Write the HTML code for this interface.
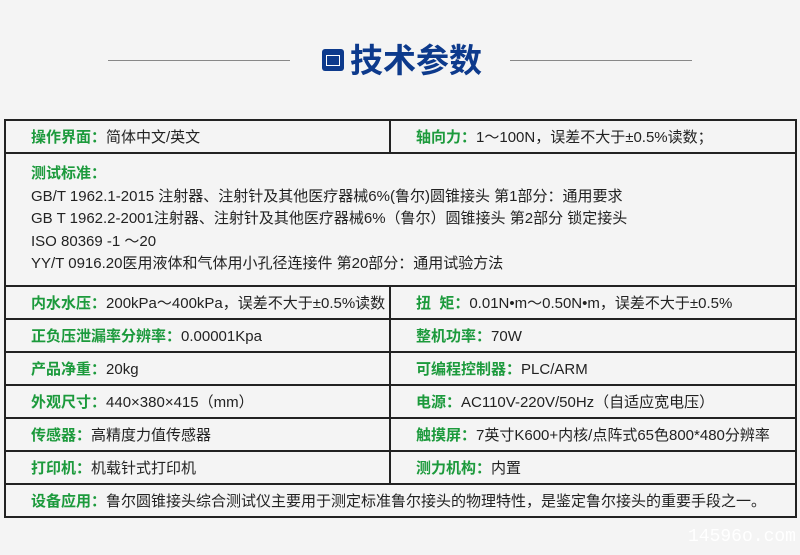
<!DOCTYPE html>
<html><head><meta charset="utf-8"><style>
*{margin:0;padding:0;box-sizing:border-box}
body{width:800px;height:555px;background:#f4f4f4;font-family:"Liberation Sans","Noto Sans CJK SC",sans-serif;font-size:15px;color:#222;position:relative;overflow:hidden}
.line{position:absolute;top:60px;height:1px;background:#888}
.title{position:absolute;left:350px;top:40px;font-size:33px;font-weight:bold;color:#0d3a8c;letter-spacing:0px;line-height:42px}
.icon{position:absolute;left:322px;top:49px;width:22px;height:22px;background:#0d3a8c;border-radius:3px}
.icon i{position:absolute;left:4px;top:6px;width:14px;height:11px;border:1.5px solid #fff}
table{position:absolute;left:4px;top:119px;width:793px;border-collapse:collapse}
td{border:2px solid #222;height:33px;padding:0 0 0 25px;vertical-align:middle;white-space:nowrap}
td.r{width:406px}
b{color:#1c9a3c;font-weight:bold}
.std{padding-top:9px;padding-bottom:6px;line-height:22.5px;height:133px;vertical-align:top}
.wm{position:absolute;right:4px;top:527px;color:#fff;font-size:18px;font-family:"Liberation Mono",monospace}
</style></head><body>
<div class="line" style="left:108px;width:182px"></div>
<div class="line" style="left:510px;width:182px"></div>
<div class="icon"><i></i></div>
<div class="title">技术参数</div>
<table>
<tr><td><b>操作界面：</b>简体中文/英文</td><td class="r"><b>轴向力：</b>1～100N，误差不大于±0.5%读数；</td></tr>
<tr><td colspan="2" class="std"><b>测试标准：</b><br>GB/T 1962.1-2015 注射器、注射针及其他医疗器械6%(鲁尔)圆锥接头 第1部分：通用要求<br>GB T 1962.2-2001注射器、注射针及其他医疗器械6%（鲁尔）圆锥接头 第2部分 锁定接头<br>ISO 80369 -1 ～20<br>YY/T 0916.20医用液体和气体用小孔径连接件 第20部分：通用试验方法</td></tr>
<tr><td><b>内水水压：</b>200kPa～400kPa，误差不大于±0.5%读数</td><td class="r"><b>扭&nbsp;&nbsp;矩：</b>0.01N•m～0.50N•m，误差不大于±0.5%</td></tr>
<tr><td><b>正负压泄漏率分辨率：</b>0.00001Kpa</td><td class="r"><b>整机功率：</b>70W</td></tr>
<tr><td><b>产品净重：</b>20kg</td><td class="r"><b>可编程控制器：</b>PLC/ARM</td></tr>
<tr><td><b>外观尺寸：</b>440×380×415（mm）</td><td class="r"><b>电源：</b>AC110V-220V/50Hz（自适应宽电压）</td></tr>
<tr><td><b>传感器：</b>高精度力值传感器</td><td class="r"><b>触摸屏：</b>7英寸K600+内核/点阵式65色800*480分辨率</td></tr>
<tr><td><b>打印机：</b>机载针式打印机</td><td class="r"><b>测力机构：</b>内置</td></tr>
<tr><td colspan="2"><b>设备应用：</b>鲁尔圆锥接头综合测试仪主要用于测定标准鲁尔接头的物理特性，是鉴定鲁尔接头的重要手段之一。</td></tr>
</table>
<div class="wm">14596o.com</div>
</body></html>
